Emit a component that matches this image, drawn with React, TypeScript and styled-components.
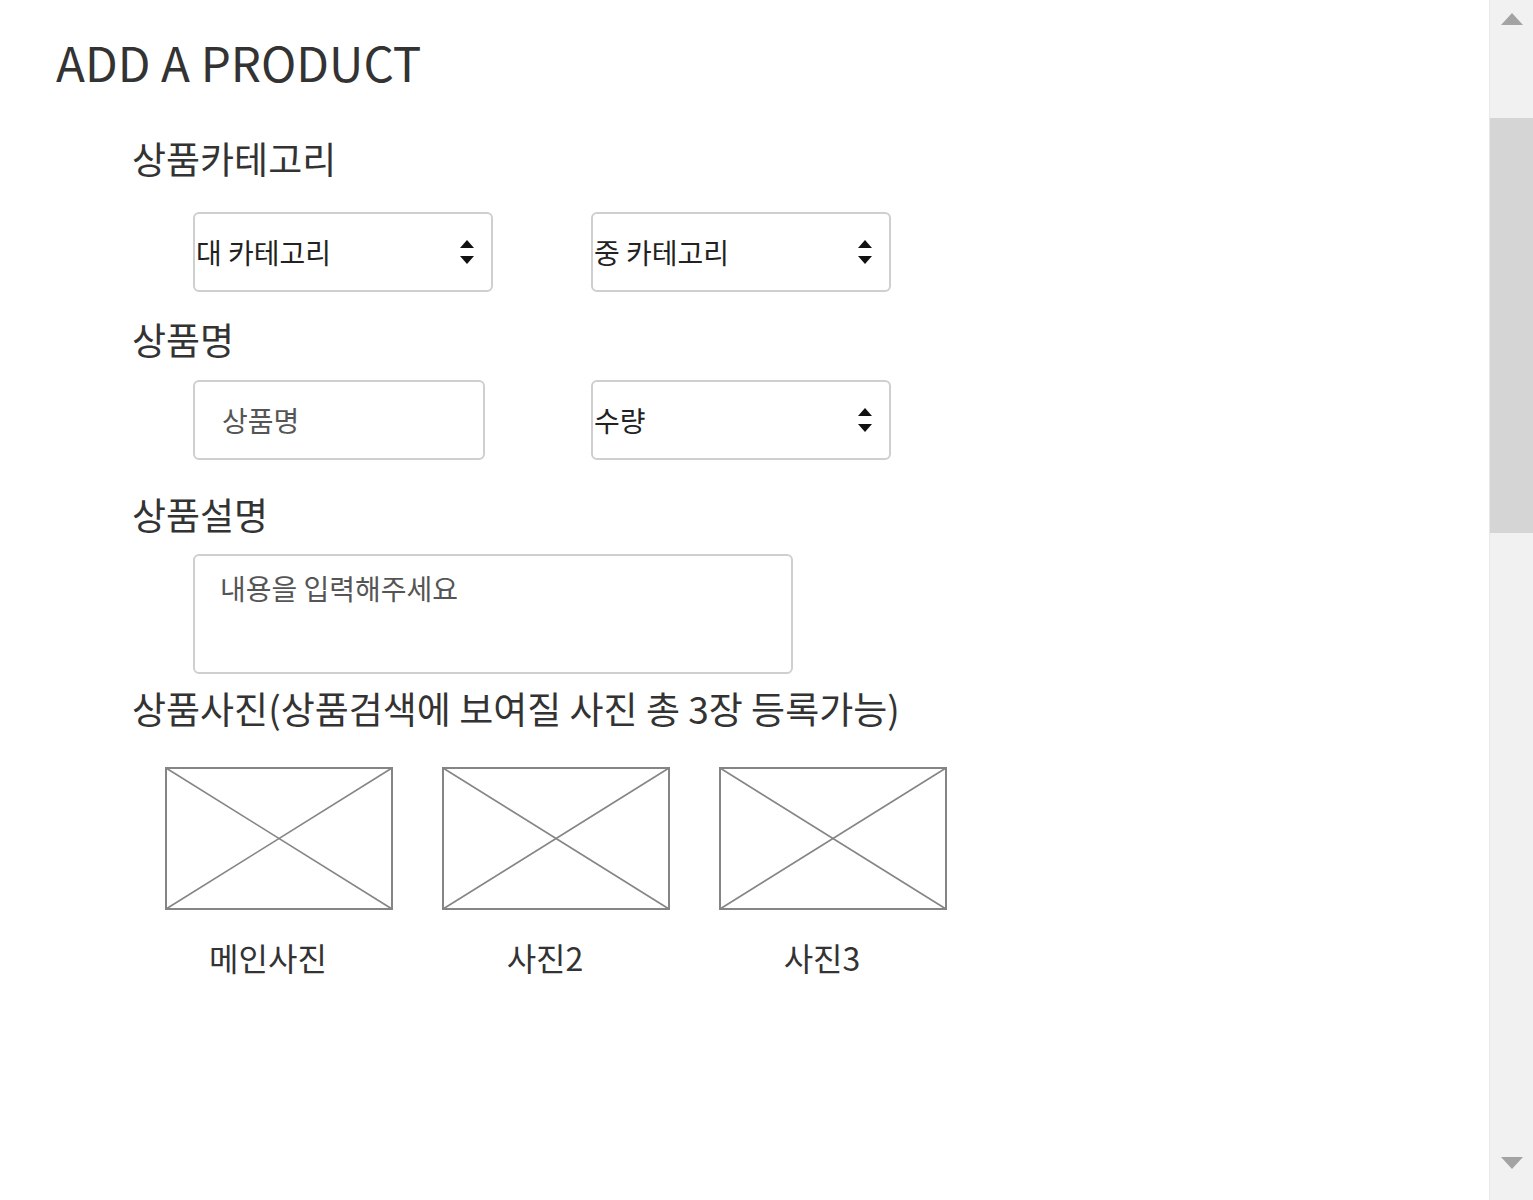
import React from 'react';
import styled, { createGlobalStyle } from 'styled-components';

const GlobalStyle = createGlobalStyle`
  html, body {
    margin: 0;
    padding: 0;
    background: #fff;
  }
  body {
    font-family: "Noto Sans CJK KR", "Noto Sans", sans-serif;
    color: #333;
    overflow: hidden;
  }
`;

const Page = styled.div`
  display: flex;
  height: 1200px;
`;

const Main = styled.main`
  flex: 1;
  padding: 38px 0 0 56px;
`;

const Title = styled.h1`
  margin: 0;
  font-size: 47.6px;
  line-height: 48px;
  font-weight: 400;
  color: #333;
`;

const Form = styled.div`
  padding-left: 76px;
`;

const Label = styled.h2<{ $top: number }>`
  margin: ${(p) => p.$top}px 0 0;
  font-size: 37px;
  line-height: 34px;
  font-weight: 400;
  color: #333;
`;

const FieldRow = styled.div<{ $top: number }>`
  display: grid;
  grid-template-columns: 300px 300px;
  column-gap: 98px;
  margin: ${(p) => p.$top}px 0 0 61px;
`;

const SelectBox = styled.div`
  width: 300px;
  height: 80px;
  box-sizing: border-box;
  border: 2px solid #cfcfcf;
  border-radius: 6px;
  display: flex;
  align-items: center;
  padding: 0 16px 0 1px;
  background: #fff;
`;

const SelectControl = styled.select`
  flex: 1;
  appearance: none;
  border: none;
  outline: none;
  background: transparent;
  padding: 0;
  font-family: inherit;
  font-size: 28px;
  color: #222;
`;

const TextInput = styled.input`
  width: 292px;
  height: 80px;
  box-sizing: border-box;
  border: 2px solid #cfcfcf;
  border-radius: 6px;
  padding: 0 0 0 27px;
  font-family: inherit;
  font-size: 28px;
  color: #333;
  outline: none;
  &::placeholder {
    color: #555;
  }
`;

const TextArea = styled.textarea`
  display: block;
  width: 600px;
  height: 120px;
  box-sizing: border-box;
  margin: 23px 0 0 61px;
  border: 2px solid #cfcfcf;
  border-radius: 6px;
  padding: 14px 25px;
  font-family: inherit;
  font-size: 28px;
  line-height: 36px;
  resize: none;
  outline: none;
  &::placeholder {
    color: #555;
  }
`;

const PhotoRow = styled.div`
  display: flex;
  gap: 49px;
  margin: 42px 0 0 33px;
`;

const PhotoItem = styled.div`
  display: flex;
  flex-direction: column;
  width: 228px;
`;

const Caption = styled.div`
  margin-top: 32px;
  padding-right: 22px;
  text-align: center;
  font-size: 32px;
  line-height: 31px;
  color: #333;
`;

const ScrollBar = styled.div`
  width: 44px;
  flex: none;
  display: flex;
  flex-direction: column;
  background: #f1f1f1;
  border-left: 1px solid #e9e9e9;
  box-sizing: border-box;
`;

const ScrollArrow = styled.div<{ $bottom?: boolean }>`
  height: 38px;
  display: flex;
  align-items: center;
  justify-content: center;
  margin-bottom: ${(p) => (p.$bottom ? 18 : 0)}px;
`;

const Track = styled.div`
  flex: 1;
`;

const Thumb = styled.div`
  margin-top: 80px;
  height: 415px;
  background: #d5d5d5;
`;

const SpinArrows = () => (
  <svg width="16" height="32" viewBox="0 0 16 32">
    <path d="M1 12 L8 4 L15 12 Z" fill="#111" />
    <path d="M1 20 L8 28 L15 20 Z" fill="#111" />
  </svg>
);

const Select: React.FC<{ label: string }> = ({ label }) => (
  <SelectBox>
    <SelectControl defaultValue="">
      <option value="">{label}</option>
    </SelectControl>
    <SpinArrows />
  </SelectBox>
);

const PhotoPlaceholder = () => (
  <svg width="228" height="143" viewBox="0 0 228 143">
    <rect x="1" y="1" width="226" height="141" fill="#fff" stroke="#858585" strokeWidth="2" />
    <line x1="1" y1="1" x2="227" y2="142" stroke="#858585" strokeWidth="1.6" />
    <line x1="227" y1="1" x2="1" y2="142" stroke="#858585" strokeWidth="1.6" />
  </svg>
);

const photos = ['메인사진', '사진2', '사진3'];

const App: React.FC = () => {
  return (
    <>
      <GlobalStyle />
      <Page>
        <Main>
          <Title>ADD A PRODUCT</Title>
          <Form>
            <Label $top={55}>상품카테고리</Label>
            <FieldRow $top={37}>
              <Select label="대 카테고리" />
              <Select label="중 카테고리" />
            </FieldRow>

            <Label $top={30}>상품명</Label>
            <FieldRow $top={24}>
              <TextInput placeholder="상품명" />
              <Select label="수량" />
            </FieldRow>

            <Label $top={37}>상품설명</Label>
            <TextArea placeholder="내용을 입력해주세요" />

            <Label $top={17}>상품사진(상품검색에 보여질 사진 총 3장 등록가능)</Label>
            <PhotoRow>
              {photos.map((p) => (
                <PhotoItem key={p}>
                  <PhotoPlaceholder />
                  <Caption>{p}</Caption>
                </PhotoItem>
              ))}
            </PhotoRow>
          </Form>
        </Main>
        <ScrollBar>
          <ScrollArrow>
            <svg width="22" height="12" viewBox="0 0 22 12">
              <path d="M0 12 L11 0 L22 12 Z" fill="#a3a3a3" />
            </svg>
          </ScrollArrow>
          <Track>
            <Thumb />
          </Track>
          <ScrollArrow $bottom>
            <svg width="22" height="12" viewBox="0 0 22 12">
              <path d="M0 0 L11 12 L22 0 Z" fill="#a3a3a3" />
            </svg>
          </ScrollArrow>
        </ScrollBar>
      </Page>
    </>
  );
};

export default App;
